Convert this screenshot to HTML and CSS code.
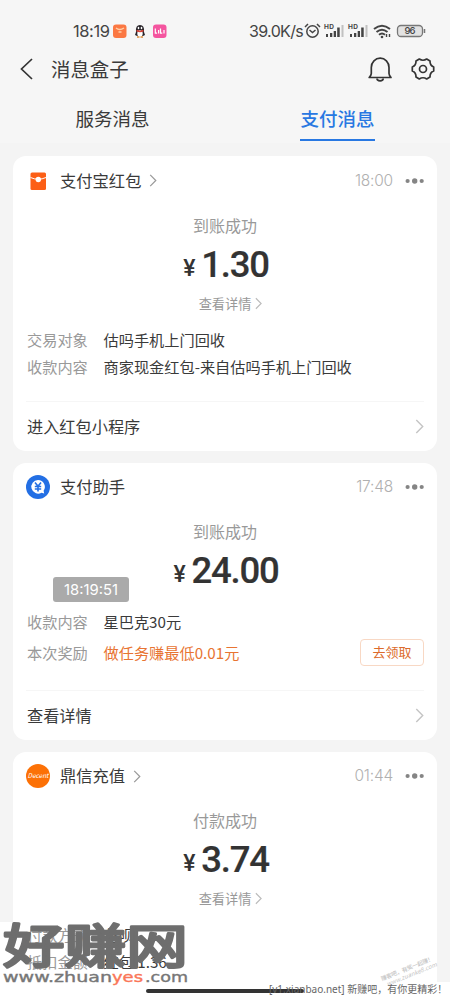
FILE: index.html
```html
<!DOCTYPE html>
<html lang="zh-CN">
<head>
<meta charset="utf-8">
<title>消息盒子</title>
<link rel="stylesheet" href="styles.css">
</head>
<body>
<svg class="defs" width="0" height="0">
  <symbol id="chev" viewBox="0 0 8 14"><path d="M1 1l6 6-6 6" fill="none" stroke="currentColor" stroke-width="1.3"/></symbol>
  <symbol id="dots" viewBox="0 0 20 6"><circle cx="2.6" cy="3" r="2.1"/><circle cx="9.7" cy="3" r="2.7"/><circle cx="16.7" cy="3" r="2.1"/></symbol>
  <symbol id="signal" viewBox="0 0 20 16"><rect x="1" y="11" width="2" height="3"/><rect x="5" y="10" width="2.3" height="4"/><rect x="8.7" y="8" width="2.3" height="6"/><rect x="12.2" y="4.5" width="2.5" height="9.5"/><rect x="16.5" y="2" width="2" height="12" opacity=".3"/></symbol>
</svg>
<div class="phone">
  <header class="head">
    <div class="status">
      <span class="clock">18:19</span>
      <svg class="apps" width="56" height="14" viewBox="0 0 56 14">
        <rect x="0" y="0.5" width="13.5" height="13.5" rx="3" fill="#fb7843"/><path d="M3 4q3.500 3 8 0M5.500 8h3" stroke="#ffd0a8" fill="none" stroke-width="1.400"/>
        <path d="M23 8q-.7-7 4-7t4 7l1 3-2 1H24l-2-1z" fill="#28242a"/><ellipse cx="27" cy="9.500" rx="2.700" ry="3.200" fill="#fff"/><ellipse cx="25.500" cy="4" rx=".8" ry="1.200" fill="#fff"/><ellipse cx="28.500" cy="4" rx=".8" ry="1.200" fill="#fff"/><path d="M23.500 6.500q3.500 1.800 7 0" stroke="#d7453a" stroke-width="1.500" fill="none"/><path d="M24 13h2.500m1 0H30" stroke="#dd8f3c" stroke-width="1.400"/>
        <rect x="40" y="0.500" width="13.500" height="13.500" rx="3" fill="#f4559f"/><path d="M42.300 4.500v4.700h1.800M45.600 6v3.500M47.500 4.500v4.700h1.800M51 6v3.500" fill="none" stroke="#fff" stroke-width="1.200"/>
      </svg>
      <span class="speed">39.0K/s</span>
      <svg class="sys" width="122" height="16" viewBox="0 0 122 16">
        <g fill="none" stroke="#444" stroke-width="1.500"><circle cx="8.500" cy="8.500" r="5.700"/><path d="M5.500 7l3 2.500L11.500 7M1 4l3-3M16 4l-3-3"/></g>
        <use href="#signal" x="21" y="0" width="20" height="16"/><use href="#signal" x="45" y="0" width="20" height="16"/>
        <text x="20" y="6" font-size="6.500" font-weight="700" textLength="10">HD</text><text x="44" y="6" font-size="6.500" font-weight="700" textLength="10">HD</text>
        <g fill="none" stroke="#444" stroke-width="2"><path d="M70 6q8-6.500 16 0M72.500 9q5.500-4.500 11 0M75 11.800q3-2.500 6 0"/></g><circle cx="78" cy="14" r="1.300"/><path d="M82.500 11v3m3-3v3" stroke="#444" stroke-width="1.400"/>
        <rect x="93.500" y="2.500" width="25" height="11" rx="3.500" fill="#e2e2e2" stroke="#777" stroke-width="1.300"/><path d="M120.500 6v4" stroke="#777" stroke-width="1.500"/><text x="100.500" y="11.300" font-size="9.500" textLength="11" font-weight="500">96</text>
      </svg>
    </div>
    <div class="nav">
      <svg class="back" width="13" height="22" viewBox="0 0 13 22"><path d="M12 1L1.500 11 12 21" fill="none" stroke="#333" stroke-width="1.700"/></svg>
      <h1>消息盒子</h1>
      <svg class="bell" width="24" height="25" viewBox="0 0 24 25" fill="none" stroke="#333" stroke-width="1.700"><path d="M1.200 20.500H23q-2-2.500-2-4V10.500C21 5 17 1.200 12.200 1.200S3.300 5 3.300 10.500v6q0 1.500-2.100 4z" stroke-linejoin="round"/><path d="M9 21.500q0 2.300 3.100 2.300t3.100-2.300"/></svg>
      <svg class="gear" width="24" height="24" viewBox="0 0 24 24" fill="none" stroke="#333" stroke-width="1.700" stroke-linejoin="round"><path d="M8.300 2Q12 4.500 15.700 2L19 4Q18.800 8.500 22.700 10v4Q18.800 15.500 19 20l-3.300 2Q12 19.500 8.300 22L5 20Q5.200 15.500 1.300 14v-4Q5.200 8.500 5 4z"/><circle cx="12" cy="12" r="3.500"/></svg>
    </div>
    <div class="tabs"><span class="tab">服务消息</span><span class="tab active">支付消息</span></div>
  </header>
  <main class="list">
    <section class="card first">
      <div class="top">
        <svg class="logo" width="24" height="24" viewBox="0 0 24 24"><rect x="4.500" y="3.500" width="15.500" height="17.500" rx="1.500" fill="#fc5f16"/><path d="M4.500 8.500q7.700 3.500 15.500 0" fill="none" stroke="#fff"/><circle cx="12.300" cy="10.500" r="2.700" fill="#fff"/></svg>
        <b class="name">支付宝红包</b><svg class="go" width="8" height="13"><use href="#chev"/></svg>
        <time>18:00</time><svg class="dots" width="20" height="6"><use href="#dots"/></svg>
      </div>
      <div class="state">到账成功</div>
      <div class="amount"><span class="yen">¥</span>1.30</div>
      <div class="detail">查看详情<svg width="7" height="13"><use href="#chev"/></svg></div>
      <div class="row r1"><span class="key">交易对象</span><span>估吗手机上门回收</span></div>
      <div class="row"><span class="key">收款内容</span><span>商家现金红包-来自估吗手机上门回收</span></div>
      <div class="foot">进入红包小程序<svg width="9" height="15"><use href="#chev"/></svg></div>
    </section>
    <section class="card second">
      <div class="top">
        <svg class="logo" width="24" height="24" viewBox="0 0 24 24"><circle cx="12" cy="12" r="12" fill="#236fe4"/><path d="M12 5a6.800 6.800 0 1 0 3.500 12.700l2.700.8-.6-2.800A6.800 6.800 0 0 0 12 5" fill="#fff"/><path d="M9 7.500l3 3.800 3-3.800M12 11v5.500M8.800 11.500h6.400M8.800 14h6.400" fill="none" stroke="#236fe4" stroke-width="1.600"/></svg>
        <b class="name">支付助手</b>
        <time>17:48</time><svg class="dots" width="20" height="6"><use href="#dots"/></svg>
      </div>
      <div class="state">到账成功</div>
      <div class="amount"><span class="yen">¥</span>24.00</div>
      <div class="stamp">18:19:51</div>
      <div class="row r2"><span class="key">收款内容</span><span>星巴克30元</span></div>
      <div class="row reward"><span class="key">本次奖励</span><span class="orange">做任务赚最低0.01元</span><span class="btn">去领取</span></div>
      <div class="foot">查看详情<svg width="9" height="15"><use href="#chev"/></svg></div>
    </section>
    <section class="card third">
      <div class="top">
        <svg class="logo" width="24" height="24" viewBox="0 0 24 24"><circle cx="12" cy="12" r="12" fill="#fc7106"/><text x="1.500" y="14.300" font-size="6.500" font-style="italic" textLength="21" fill="#fff">Decent</text></svg>
        <b class="name">鼎信充值</b><svg class="go" width="8" height="13"><use href="#chev"/></svg>
        <time>01:44</time><svg class="dots" width="20" height="6"><use href="#dots"/></svg>
      </div>
      <div class="state">付款成功</div>
      <div class="amount"><span class="yen">¥</span>3.74</div>
      <div class="detail">查看详情<svg width="7" height="13"><use href="#chev"/></svg></div>
      <div class="row r3"><span class="key">付款方式</span><span>花呗</span></div>
      <div class="row"><span class="key">抵扣金额</span><span>红包 1.36</span></div>
    </section>
  </main>
  <div class="homebar"></div>
  <svg class="mark" width="192" height="74" viewBox="0 0 192 74">
    <rect x="0" y="10" width="13" height="60" fill="#fff"/>
    <text transform="translate(3 50.500) scale(1.310 1)" font-size="47" font-weight="400" fill="#6e6e6e" stroke="#6e6e6e" stroke-width="2.800" stroke-linejoin="round">好赚网</text>
    <g class="url" font-size="14.500"><text x="3" y="70" textLength="109" lengthAdjust="spacingAndGlyphs">www.zhuan</text><text class="yes" x="112" y="70" textLength="31" lengthAdjust="spacingAndGlyphs">yes</text><text x="145" y="70" textLength="43" lengthAdjust="spacingAndGlyphs">.com</text></g>
  </svg>
  <svg class="faint" width="64" height="34" viewBox="0 0 64 34" fill="#c4c4c4"><g transform="translate(4 25) rotate(-22)"><text font-size="5.800" font-weight="500" textLength="56">赚客吧，有奖一起赚！</text><text x="3" y="7" font-size="6" font-style="italic" textLength="54">www.zuanke8.com</text></g></svg>
  <div class="credit">[v1.xianbao.net] <span>新赚吧，有你更精彩！</span></div>
</div>
</body>
</html>
```

FILE: styles.css
```css
* { box-sizing: border-box; }
body { margin: 0; background: #fff; font-family: "Noto Sans CJK SC", sans-serif; color: #3a3a3a; }
svg { display: block; flex: none; }
.defs { position: absolute; }
.phone { position: relative; width: 450px; height: 1000px; overflow: hidden; background: #fff; }
.head { height: 143px; padding-top: 20px; background: #f6f6f6; }
.status { display: flex; align-items: center; height: 22px; padding-left: 73px; color: #444; fill: #444; }
.clock { width: 40px; font: 16.500px/22px Inter, sans-serif; letter-spacing: -.4px; }
.speed { width: 55px; margin-left: 80px; font: 16px/22px Inter, sans-serif; letter-spacing: -.65px; white-space: nowrap; }
.sys { font-family: Inter, sans-serif; }
.nav { display: flex; align-items: center; height: 54px; padding: 0 15px 0 20px; }
h1 { flex: 1; margin: 0 0 0 18px; font-size: 19.400px; line-height: 28px; font-weight: 400; }
.gear { margin-left: 19px; }
.tabs { display: flex; height: 45px; }
.tab { width: 225px; display: flex; justify-content: center; font-size: 18.500px; line-height: 44px; }
.tab.active { color: #2878e2; font-weight: 500; }
.tab.active::after { content: ""; width: 75px; height: 2px; margin: 43px 0 0 -75px; background: #2878e2; }
.list { height: 839px; overflow: hidden; padding: 13px 13px 0; background: #f4f4f4; display: flex; flex-direction: column; gap: 12px; }
.card { position: relative; flex: none; padding: 0 13px; border-radius: 13px; background: #fff; }
.first { height: 295px; }
.second { height: 277px; }
.third { height: 270px; }
.top { display: flex; align-items: center; height: 49px; }
.second .top, .third .top { height: 48px; }
.name { margin: -2px 0 0 10px; font-size: 16.300px; font-weight: 400; line-height: 24px; }
.go { margin-left: 8px; color: #999; }
time { margin-left: auto; font: 300 15.500px/24px Inter, sans-serif; color: #b0b0b0; letter-spacing: -.2px; }
.dots { margin-left: 12px; margin-right: -1px; fill: #858585; }
.state { height: 40px; text-align: center; font-size: 16px; line-height: 40px; color: #999; }
.amount { display: flex; justify-content: center; height: 40px; font: 500 36.500px/39px Roboto, sans-serif; letter-spacing: -1.200px; color: #333; -webkit-text-stroke: .2px #333; padding-left: 2px; }
.yen { margin: 4px 7px 0 0; font-size: 23px; -webkit-text-stroke: 0; }
.detail { display: flex; align-items: center; justify-content: center; gap: 4px; height: 36px; padding-left: 11px; font-size: 13.200px; color: #999; }
.detail svg { color: #bbb; }
.row { display: flex; align-items: center; height: 27px; padding-left: 1px; font-size: 15.200px; white-space: nowrap; }
.r1 { margin-top: 4px; }
.key { width: 76.500px; color: #999; }
.foot { position: absolute; left: 13px; right: 13px; bottom: 1px; display: flex; justify-content: space-between; align-items: center; height: 49px; padding-left: 1px; border-top: 1px solid #f6f6f6; font-size: 16.200px; }
.foot svg { color: #c4c4c4; }
.stamp { position: absolute; left: 40px; top: 114px; width: 76px; height: 25px; border-radius: 3px; background: #aaa; color: #fff; text-align: center; font: 14.800px/26px Inter, sans-serif; letter-spacing: 0; }
.r2 { margin-top: 16px; height: 28px; }
.reward { height: 34px; }
.orange { color: #e87432; }
.btn { margin-left: auto; width: 64px; height: 27px; border: 1px solid #f8d8c4; border-radius: 4px; color: #dc6b2c; font-size: 13px; line-height: 24px; text-align: center; }
.r3 { margin-top: 4px; }
.homebar { position: absolute; left: 146px; top: 989px; width: 158px; height: 4px; border-radius: 2px; background: #333; }
.mark { position: absolute; left: 0; top: 912px; }
.url { font-family: "DejaVu Sans", sans-serif; fill: #777; stroke: #777; stroke-width: .4px; }
.yes { fill: #fa7658; stroke: #fa7658; }
.faint { position: absolute; left: 378px; top: 956px; }
.credit { position: absolute; left: 269px; top: 979px; width: 181px; height: 20px; font: 10px/20px "Noto Sans", "Noto Sans CJK SC", sans-serif; color: #666; white-space: nowrap; }
```
